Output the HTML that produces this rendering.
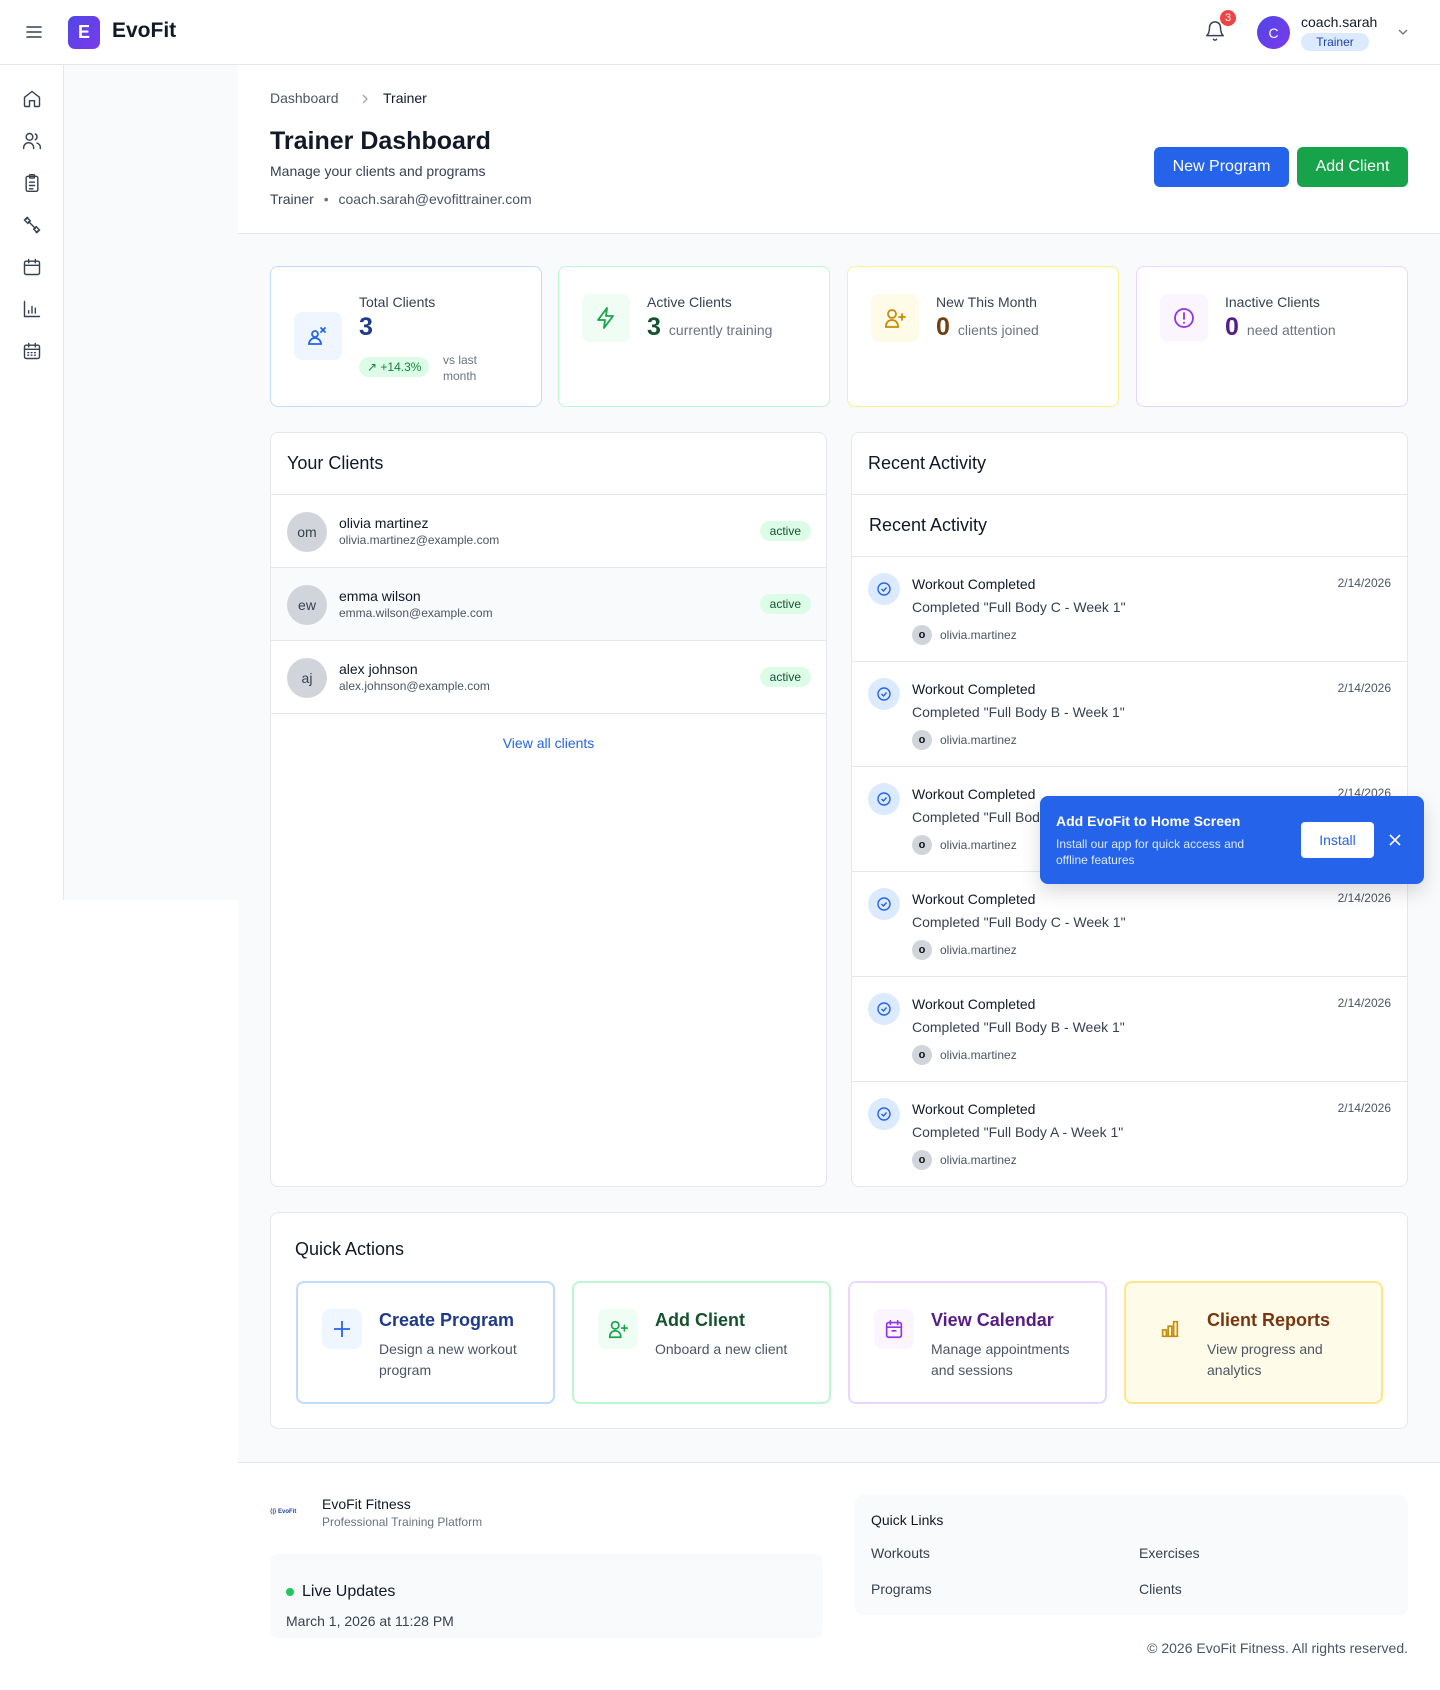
<!DOCTYPE html>
<html><head><meta charset="utf-8"><style>
*{box-sizing:border-box;margin:0;padding:0}
body{width:1440px;height:1690px;position:relative;background:#fff;font-family:"Liberation Sans",Arial,sans-serif;color:#111827;overflow:hidden}
.a{position:absolute}
svg{display:block}
.card{position:absolute;background:#fff;border:1px solid #e5e7eb;border-radius:8px}
.stat{position:absolute;top:266px;width:272px;height:141px;background:#fff;border-radius:8px;border:1.5px solid}
.stat .ib{position:absolute;left:23px;width:48px;height:48px;border-radius:8px;display:flex;align-items:center;justify-content:center}
.stat .lb{position:absolute;left:88px;top:27px;font-size:14px;color:#374151}
.stat .num{position:absolute;left:88px;top:46px;font-size:25px;font-weight:bold}
.stat .sub{font-size:14px;color:#6b7280;font-weight:normal;margin-left:8px}
.row{position:absolute;left:0;width:100%;height:73px;border-top:1px solid #e5e7eb}
.av{position:absolute;left:16px;top:17px;width:40px;height:40px;border-radius:50%;background:#d1d5db;color:#374151;font-size:14px;display:flex;align-items:center;justify-content:center}
.nm{position:absolute;left:68px;top:20px;font-size:14px;color:#111827}
.em{position:absolute;left:68px;top:38px;font-size:12px;color:#4b5563}
.bd{position:absolute;right:15px;top:26px;background:#dcfce7;color:#14532d;font-size:12px;padding:3px 10px;border-radius:11px}
.it{position:absolute;left:0;width:100%;height:105px;border-top:1px solid #e5e7eb}
.it .ci{position:absolute;left:16px;top:16px;width:32px;height:32px;border-radius:50%;background:#dbeafe;display:flex;align-items:center;justify-content:center}
.it .t{position:absolute;left:60px;top:19px;font-size:14px;color:#111827}
.it .s{position:absolute;left:60px;top:42px;font-size:14px;color:#374151}
.it .u{position:absolute;left:60px;top:68px;font-size:12px;color:#4b5563;display:flex;align-items:center}
.it .u i{font-style:normal;width:20px;height:20px;border-radius:50%;background:#d1d5db;color:#111;font-size:11px;display:inline-flex;align-items:center;justify-content:center;margin-right:8px;font-weight:bold}
.it .d{position:absolute;right:16px;top:19px;font-size:12px;color:#4b5563}
.qa{position:absolute;top:1281px;width:259px;height:123px;border-radius:8px;border:2px solid}
.qa .ib{position:absolute;left:24px;top:26px;width:40px;height:40px;border-radius:8px;display:flex;align-items:center;justify-content:center}
.qa .h{position:absolute;left:81px;top:27px;font-size:18px;font-weight:bold}
.qa .p{position:absolute;left:81px;top:56px;font-size:14px;color:#4b5563;line-height:21px;width:160px}
.sb{position:absolute;left:22px}
</style></head><body>
<div class="a" style="left:0;top:0;width:1440px;height:65px;border-bottom:1px solid #e5e7eb;background:#fff"></div>
<svg class="a" style="left:25px;top:23px" width="18" height="18" viewBox="0 0 18 18" fill="none" stroke="#374151" stroke-width="1.6" stroke-linecap="round"><path d="M2 4h14M2 9h14M2 14h14"/></svg>
<div class="a" style="left:68px;top:16px;width:32px;height:33px;border-radius:7px;background:linear-gradient(135deg,#4f46e5,#7c3aed);color:#fff;font-weight:bold;font-size:18px;display:flex;align-items:center;justify-content:center">E</div>
<div class="a" style="left:112px;top:19px;font-size:21px;font-weight:bold;color:#111827">EvoFit</div>
<svg class="a" style="left:1204px;top:20px" width="22" height="22" viewBox="0 0 24 24" fill="none" stroke="#374151" stroke-width="1.6" stroke-linecap="round" stroke-linejoin="round"><path d="M6 8a6 6 0 0 1 12 0c0 7 3 9 3 9H3s3-2 3-9"/><path d="M10.3 21a1.94 1.94 0 0 0 3.4 0"/></svg>
<div class="a" style="left:1220px;top:10px;width:16px;height:16px;border-radius:50%;background:#ef4444;color:#fff;font-size:11px;display:flex;align-items:center;justify-content:center">3</div>
<div class="a" style="left:1257px;top:16px;width:33px;height:33px;border-radius:50%;background:linear-gradient(135deg,#4f46e5,#7c3aed);color:#fff;font-size:14px;display:flex;align-items:center;justify-content:center">C</div>
<div class="a" style="left:1301px;top:14px;font-size:14px;color:#111827">coach.sarah</div>
<div class="a" style="left:1301px;top:33px;width:68px;height:18px;border-radius:9px;background:#dbeafe;color:#1e40af;font-size:12px;text-align:center;line-height:18px">Trainer</div>
<svg class="a" style="left:1397px;top:27px" width="12" height="10" viewBox="0 0 12 10" fill="none" stroke="#6b7280" stroke-width="1.3"><path d="M2 3l4 4 4-4"/></svg>
<div class="a" style="left:0;top:65px;width:64px;height:835px;border-right:1px solid #e5e7eb;background:#fff"></div>
<div class="a" style="left:64px;top:65px;width:174px;height:835px;background:#f9fafb"></div>
<svg class="sb" style="top:89px" width="20" height="20" viewBox="0 0 24 24" fill="none" stroke="#374151" stroke-width="1.7" stroke-linejoin="round"><path d="M3 10l9-7 9 7v10a1 1 0 0 1-1 1h-5v-7h-6v7H4a1 1 0 0 1-1-1z"/></svg>
<svg class="sb" style="top:131px" width="20" height="20" viewBox="0 0 24 24" fill="none" stroke="#374151" stroke-width="1.7" stroke-linecap="round"><circle cx="9" cy="7" r="4"/><path d="M2 21v-1a6 6 0 0 1 12 0v1M16 3.5a4 4 0 0 1 0 7M22 21v-1a6 6 0 0 0-4-5.6"/></svg>
<svg class="sb" style="top:173px" width="20" height="20" viewBox="0 0 24 24" fill="none" stroke="#374151" stroke-width="1.7" stroke-linecap="round"><rect x="5" y="4" width="14" height="18" rx="2"/><rect x="9" y="2" width="6" height="4" rx="1"/><path d="M9 11h6M9 15h6M9 19h4"/></svg>
<svg class="sb" style="top:215px" width="20" height="20" viewBox="0 0 24 24" fill="none" stroke="#374151" stroke-width="1.7" stroke-linecap="round"><path d="M3 6l3-3 4 4-3 3zM14 17l3-3 4 4-3 3zM8 8l8 8M5 5l2-2M17 21l2-2"/></svg>
<svg class="sb" style="top:257px" width="20" height="20" viewBox="0 0 24 24" fill="none" stroke="#374151" stroke-width="1.7" stroke-linecap="round"><rect x="3" y="5" width="18" height="16" rx="2"/><path d="M3 10h18M8 3v4M16 3v4"/></svg>
<svg class="sb" style="top:299px" width="20" height="20" viewBox="0 0 24 24" fill="none" stroke="#374151" stroke-width="1.7" stroke-linecap="round"><path d="M3 3v18h18M8 17v-3M12 17V9M16 17v-6"/></svg>
<svg class="sb" style="top:341px" width="20" height="20" viewBox="0 0 24 24" fill="none" stroke="#374151" stroke-width="1.7" stroke-linecap="round"><rect x="3" y="5" width="18" height="16" rx="2"/><path d="M3 10h18M8 3v4M16 3v4M7 14h1M11 14h1M15 14h1M7 17h1M11 17h1M15 17h1"/></svg>
<div class="a" style="left:238px;top:233px;width:1202px;height:1229px;background:#f9fafb;border-top:1px solid #e5e7eb"></div>
<div class="a" style="left:270px;top:90px;font-size:14px;color:#4b5563">Dashboard</div>
<svg class="a" style="left:360px;top:93px" width="10" height="12" viewBox="0 0 10 12" fill="none" stroke="#9ca3af" stroke-width="1.3"><path d="M3 2l4 4-4 4"/></svg>
<div class="a" style="left:383px;top:90px;font-size:14px;color:#111827">Trainer</div>
<div class="a" style="left:270px;top:127px;font-size:25px;font-weight:bold;color:#111827">Trainer Dashboard</div>
<div class="a" style="left:270px;top:163px;font-size:14px;color:#374151">Manage your clients and programs</div>
<div class="a" style="left:270px;top:191px;font-size:14px;color:#374151">Trainer <span style="color:#6b7280;margin:0 6px">•</span> <span style="color:#4b5563">coach.sarah@evofittrainer.com</span></div>
<div class="a" style="left:1154px;top:147px;width:135px;height:40px;border-radius:6px;background:#2563eb;color:#fff;font-size:16px;display:flex;align-items:center;justify-content:center">New Program</div>
<div class="a" style="left:1297px;top:147px;width:111px;height:40px;border-radius:6px;background:#16a34a;color:#fff;font-size:16px;display:flex;align-items:center;justify-content:center">Add Client</div>
<div class="stat" style="left:270px;border-color:#bfdbfe">
 <div class="ib" style="top:45px;background:#eff6ff"><svg width="24" height="24" viewBox="0 0 24 24" fill="none" stroke="#2563eb" stroke-width="1.8" stroke-linecap="round"><circle cx="9" cy="10" r="3"/><path d="M3 20a6 6 0 0 1 12 0zM15 4l4 4M19 4l-4 4"/></svg></div>
 <div class="lb">Total Clients</div><div class="num" style="color:#1e3a8a">3</div>
 <div class="a" style="left:88px;top:90px;background:#dcfce7;color:#15803d;font-size:12px;padding:3px 8px;border-radius:10px">↗ +14.3%</div>
 <div class="a" style="left:172px;top:85px;font-size:12px;color:#6b7280;line-height:16px">vs last<br>month</div>
</div>
<div class="stat" style="left:558px;border-color:#bbf7d0">
 <div class="ib" style="top:27px;background:#f0fdf4"><svg width="24" height="24" viewBox="0 0 24 24" fill="none" stroke="#16a34a" stroke-width="1.8" stroke-linejoin="round"><path d="M13 2L4 14h7l-1 8 9-12h-7z"/></svg></div>
 <div class="lb">Active Clients</div><div class="num" style="color:#14532d">3<span class="sub">currently training</span></div>
</div>
<div class="stat" style="left:847px;border-color:#fef08a">
 <div class="ib" style="top:27px;background:#fefce8"><svg width="24" height="24" viewBox="0 0 24 24" fill="none" stroke="#ca8a04" stroke-width="1.8" stroke-linecap="round"><circle cx="9" cy="8" r="4"/><path d="M3 21v-1a6 6 0 0 1 12 0v1zM19 8v6M16 11h6"/></svg></div>
 <div class="lb">New This Month</div><div class="num" style="color:#713f12">0<span class="sub">clients joined</span></div>
</div>
<div class="stat" style="left:1136px;border-color:#e9d5ff">
 <div class="ib" style="top:27px;background:#faf5ff"><svg width="24" height="24" viewBox="0 0 24 24" fill="none" stroke="#9333ea" stroke-width="1.8" stroke-linecap="round"><circle cx="12" cy="12" r="9"/><path d="M12 7v6M12 16.5v.5"/></svg></div>
 <div class="lb">Inactive Clients</div><div class="num" style="color:#581c87">0<span class="sub">need attention</span></div>
</div>
<div class="card" style="left:270px;top:432px;width:557px;height:755px">
 <div class="a" style="left:16px;top:20px;font-size:18px">Your Clients</div>
 <div class="row" style="top:61px"><div class="av">om</div><div class="nm">olivia martinez</div><div class="em">olivia.martinez@example.com</div><div class="bd">active</div></div>
 <div class="row" style="top:134px;background:#f9fafb"><div class="av">ew</div><div class="nm">emma wilson</div><div class="em">emma.wilson@example.com</div><div class="bd">active</div></div>
 <div class="row" style="top:207px"><div class="av">aj</div><div class="nm">alex johnson</div><div class="em">alex.johnson@example.com</div><div class="bd">active</div></div>
 <div class="row" style="top:280px;height:1px"></div>
 <div class="a" style="left:0;width:100%;top:302px;text-align:center;font-size:14px;color:#2563eb">View all clients</div>
</div>
<div class="card" style="left:851px;top:432px;width:557px;height:755px;overflow:hidden">
 <div class="a" style="left:16px;top:20px;font-size:18px">Recent Activity</div>
 <div class="a" style="left:0;top:61px;width:100%;height:700px;border-top:1px solid #e5e7eb">
  <div class="a" style="left:17px;top:20px;font-size:18px">Recent Activity</div>
  <div class="it" style="top:61px"><div class="ci"><svg width="16" height="16" viewBox="0 0 16 16" fill="none" stroke="#2563eb" stroke-width="1.4"><circle cx="8" cy="8" r="6"/><path d="M5.5 8l2 2 3-3.5"/></svg></div><div class="t">Workout Completed</div><div class="s">Completed "Full Body C - Week 1"</div><div class="u"><i>o</i>olivia.martinez</div><div class="d">2/14/2026</div></div>
  <div class="it" style="top:166px"><div class="ci"><svg width="16" height="16" viewBox="0 0 16 16" fill="none" stroke="#2563eb" stroke-width="1.4"><circle cx="8" cy="8" r="6"/><path d="M5.5 8l2 2 3-3.5"/></svg></div><div class="t">Workout Completed</div><div class="s">Completed "Full Body B - Week 1"</div><div class="u"><i>o</i>olivia.martinez</div><div class="d">2/14/2026</div></div>
  <div class="it" style="top:271px"><div class="ci"><svg width="16" height="16" viewBox="0 0 16 16" fill="none" stroke="#2563eb" stroke-width="1.4"><circle cx="8" cy="8" r="6"/><path d="M5.5 8l2 2 3-3.5"/></svg></div><div class="t">Workout Completed</div><div class="s">Completed "Full Body A - Week 1"</div><div class="u"><i>o</i>olivia.martinez</div><div class="d">2/14/2026</div></div>
  <div class="it" style="top:376px"><div class="ci"><svg width="16" height="16" viewBox="0 0 16 16" fill="none" stroke="#2563eb" stroke-width="1.4"><circle cx="8" cy="8" r="6"/><path d="M5.5 8l2 2 3-3.5"/></svg></div><div class="t">Workout Completed</div><div class="s">Completed "Full Body C - Week 1"</div><div class="u"><i>o</i>olivia.martinez</div><div class="d">2/14/2026</div></div>
  <div class="it" style="top:481px"><div class="ci"><svg width="16" height="16" viewBox="0 0 16 16" fill="none" stroke="#2563eb" stroke-width="1.4"><circle cx="8" cy="8" r="6"/><path d="M5.5 8l2 2 3-3.5"/></svg></div><div class="t">Workout Completed</div><div class="s">Completed "Full Body B - Week 1"</div><div class="u"><i>o</i>olivia.martinez</div><div class="d">2/14/2026</div></div>
  <div class="it" style="top:586px"><div class="ci"><svg width="16" height="16" viewBox="0 0 16 16" fill="none" stroke="#2563eb" stroke-width="1.4"><circle cx="8" cy="8" r="6"/><path d="M5.5 8l2 2 3-3.5"/></svg></div><div class="t">Workout Completed</div><div class="s">Completed "Full Body A - Week 1"</div><div class="u"><i>o</i>olivia.martinez</div><div class="d">2/14/2026</div></div>
 </div>
</div>
<div class="a" style="left:1040px;top:796px;width:384px;height:88px;background:#2563eb;border-radius:8px;box-shadow:0 8px 20px rgba(0,0,0,.15)">
 <div class="a" style="left:16px;top:17px;color:#fff;font-size:14px;font-weight:bold">Add EvoFit to Home Screen</div>
 <div class="a" style="left:16px;top:40px;color:#dbeafe;font-size:12px;line-height:16px;width:210px">Install our app for quick access and offline features</div>
 <div class="a" style="left:261px;top:26px;width:73px;height:36px;background:#fff;border-radius:4px;color:#2563eb;font-size:14px;display:flex;align-items:center;justify-content:center">Install</div>
 <svg class="a" style="left:348px;top:37px" width="14" height="14" viewBox="0 0 14 14" stroke="#fff" stroke-width="1.6"><path d="M2 2l10 10M12 2L2 12"/></svg>
</div>
<div class="card" style="left:270px;top:1212px;width:1138px;height:217px"></div>
<div class="a" style="left:295px;top:1239px;font-size:18px">Quick Actions</div>
<div class="qa" style="left:296px;border-color:#bfdbfe;background:#fff"><div class="ib" style="background:#eff6ff"><svg width="22" height="22" viewBox="0 0 22 22" stroke="#2563eb" stroke-width="1.8"><path d="M11 3v16M3 11h16"/></svg></div><div class="h" style="color:#1e3a8a">Create Program</div><div class="p">Design a new workout program</div></div>
<div class="qa" style="left:572px;border-color:#bbf7d0;background:#fff"><div class="ib" style="background:#f0fdf4"><svg width="22" height="22" viewBox="0 0 24 24" fill="none" stroke="#16a34a" stroke-width="1.8" stroke-linecap="round"><circle cx="9" cy="8" r="4"/><path d="M3 21v-1a6 6 0 0 1 12 0v1zM19 8v6M16 11h6"/></svg></div><div class="h" style="color:#14532d">Add Client</div><div class="p">Onboard a new client</div></div>
<div class="qa" style="left:848px;border-color:#e9d5ff;background:#fff"><div class="ib" style="background:#faf5ff"><svg width="22" height="22" viewBox="0 0 24 24" fill="none" stroke="#9333ea" stroke-width="1.8" stroke-linecap="round"><rect x="4" y="5" width="16" height="16" rx="2"/><path d="M4 10h16M8 3v4M16 3v4M10 14h4"/></svg></div><div class="h" style="color:#581c87">View Calendar</div><div class="p">Manage appointments and sessions</div></div>
<div class="qa" style="left:1124px;border-color:#fde68a;background:#fefce8"><div class="ib"><svg width="22" height="22" viewBox="0 0 24 24" fill="none" stroke="#ca8a04" stroke-width="1.8"><path d="M4 20V13h4v7zM10 20V9h4v11zM16 20V4h4v16zM3 20h18"/></svg></div><div class="h" style="color:#78350f">Client Reports</div><div class="p">View progress and analytics</div></div>
<div class="a" style="left:238px;top:1462px;width:1202px;border-top:1px solid #e5e7eb"></div>
<div class="a" style="left:270px;top:1508px;font-size:6px;color:#1e40af;font-weight:bold">⟨|⟩ EvoFit</div>
<div class="a" style="left:322px;top:1496px;font-size:14px;color:#111827">EvoFit Fitness</div>
<div class="a" style="left:322px;top:1515px;font-size:12px;color:#6b7280">Professional Training Platform</div>
<div class="a" style="left:270px;top:1554px;width:553px;height:84px;background:#f9fafb;border-radius:8px">
 <div class="a" style="left:16px;top:34px;width:8px;height:8px;border-radius:50%;background:#22c55e"></div>
 <div class="a" style="left:32px;top:29px;font-size:16px;color:#111827">Live Updates</div>
 <div class="a" style="left:16px;top:59px;font-size:14px;color:#374151">March 1, 2026 at 11:28 PM</div>
</div>
<div class="a" style="left:855px;top:1495px;width:553px;height:120px;background:#f9fafb;border-radius:8px;font-size:14px;color:#374151">
 <div class="a" style="left:16px;top:17px;color:#111827">Quick Links</div>
 <div class="a" style="left:16px;top:50px">Workouts</div>
 <div class="a" style="left:284px;top:50px">Exercises</div>
 <div class="a" style="left:16px;top:86px">Programs</div>
 <div class="a" style="left:284px;top:86px">Clients</div>
</div>
<div class="a" style="right:32px;top:1640px;font-size:14px;color:#4b5563">© 2026 EvoFit Fitness. All rights reserved.</div>
</body></html>
